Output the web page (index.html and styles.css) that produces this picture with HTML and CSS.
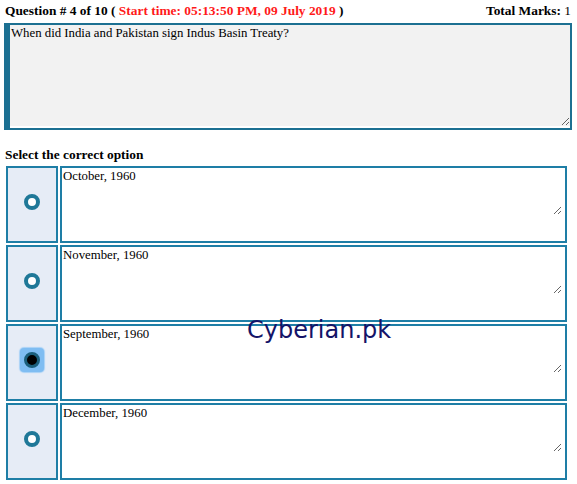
FILE: index.html
```html
<!DOCTYPE html>
<html>
<head>
<meta charset="utf-8">
<link rel="stylesheet" href="styles.css">
</head>
<body>
<div class="page">
  <div class="head">
    <div class="qno"><b>Question # 4 of 10</b> <b>(</b> <b class="start">Start time: 05:13:50 PM, 09 July 2019</b> <b>)</b></div>
    <div class="marks"><b>Total Marks:</b> 1</div>
  </div>
  <div class="qbox"><textarea class="qtext">When did India and Pakistan sign Indus Basin Treaty?</textarea></div>
  <div class="sel">Select the correct option</div>
  <div class="opts">
    <div class="row">
      <div class="pick"><span class="radio"></span></div>
      <div class="ans"><textarea class="atext">October, 1960</textarea></div>
    </div>
    <div class="row">
      <div class="pick"><span class="radio"></span></div>
      <div class="ans"><textarea class="atext">November, 1960</textarea></div>
    </div>
    <div class="row">
      <div class="pick"><span class="focus"><span class="radio checked"></span></span></div>
      <div class="ans"><textarea class="atext">September, 1960</textarea></div>
    </div>
    <div class="row">
      <div class="pick"><span class="radio"></span></div>
      <div class="ans"><textarea class="atext">December, 1960</textarea></div>
    </div>
  </div>
  <div class="mark">Cyberian.pk</div>
</div>
</body>
</html>
```

FILE: styles.css
```css
html, body { margin: 0; padding: 0; background: #fff; }
body { font-family: "Liberation Serif", "Times New Roman", serif; color: #000; }
.page { position: relative; padding: 3px 5px 0 4px; width: 568px; }
.head { display: flex; justify-content: space-between; font-size: 13.4px; line-height: 16px; padding-left: 1px; }
.start { color: #ff1a1a; }
.marks { padding-right: 1px; }
.qbox { margin-top: 4px; border: 2px solid #1c7092; border-left-width: 6px; background: #fff; height: 103px; }
.qtext { display: block; box-sizing: border-box; width: 100%; height: 101px; margin: 0; border: none; background: #f2f2f2; font-family: "Liberation Serif", serif; font-size: 12.8px; padding: 1px 1px; color: #000; outline: none; }
.sel { font-weight: bold; font-size: 13.4px; margin: 17px 0 0 1px; line-height: 16px; }
.opts { display: flex; flex-direction: column; gap: 2px; margin-top: 3px; padding-left: 2px; }
.row { display: flex; gap: 2px; height: 77px; }
.pick { box-sizing: border-box; width: 52px; border: 2px solid #1e7ea6; background: #e6ecf6; display: flex; align-items: center; justify-content: center; padding-bottom: 5px; }
.ans { box-sizing: border-box; width: 507px; border: 2px solid #1e7ea6; background: #fff; }
.atext { display: block; box-sizing: border-box; width: 500px; height: 47px; margin: 0; border: none; background: transparent; font-family: "Liberation Serif", serif; font-size: 12.8px; padding: 1px 1px; color: #000; outline: none; }
.radio { display: block; box-sizing: border-box; width: 16px; height: 16px; border: 4px solid #1f7898; border-radius: 50%; background: #fff; }
.radio.checked { background: #000; border-color: #1b5f7c; border-width: 3px; }
.focus { display: block; padding: 4px; background: #7fbdf2; border-radius: 4px; box-shadow: 0 0 1px 1px #a8d2f7; }
.mark { position: absolute; left: 247px; top: 316px; font-family: "DejaVu Sans", Verdana, sans-serif; font-size: 24px; color: #141468; }
```
